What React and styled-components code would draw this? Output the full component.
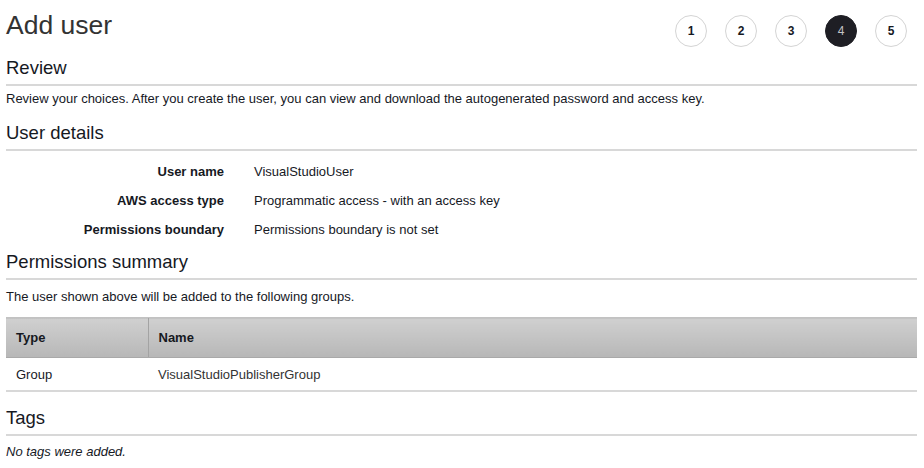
import { createGlobalStyle } from "styled-components";
import styled from "styled-components";

const GlobalStyle = createGlobalStyle`
  body {
    margin: 0;
    background: #ffffff;
    font-family: "Liberation Sans", Arial, sans-serif;
    color: #16191f;
  }
`;

const steps = [1, 2, 3, 4, 5];

const details = [
  { label: "User name", value: "VisualStudioUser" },
  { label: "AWS access type", value: "Programmatic access - with an access key" },
  { label: "Permissions boundary", value: "Permissions boundary is not set" },
];

export default function App() {
  return (
    <Page>
      <GlobalStyle />
      <TopBar>
        <Title>Add user</Title>
        <Steps>
          {steps.map((s) => (
            <Step key={s} $active={s === 4}>
              {s}
            </Step>
          ))}
        </Steps>
      </TopBar>

      <SectionTitle>Review</SectionTitle>
      <Text $top={5}>
        Review your choices. After you create the user, you can view and
        download the autogenerated password and access key.
      </Text>

      <SectionTitle>User details</SectionTitle>
      <DetailGrid>
        {details.map((d) => (
          <DetailRow key={d.label}>
            <Label>{d.label}</Label>
            <Value>{d.value}</Value>
          </DetailRow>
        ))}
      </DetailGrid>

      <SectionTitle>Permissions summary</SectionTitle>
      <Text $top={9}>
        The user shown above will be added to the following groups.
      </Text>
      <Table>
        <thead>
          <tr>
            <Th $w={142}>Type</Th>
            <Th>Name</Th>
          </tr>
        </thead>
        <tbody>
          <tr>
            <Td>Group</Td>
            <Td $muted>VisualStudioPublisherGroup</Td>
          </tr>
        </tbody>
      </Table>

      <SectionTitle>Tags</SectionTitle>
      <Note>No tags were added.</Note>
    </Page>
  );
}

const Page = styled.div`
  padding: 0 7px 0 6px;
`;

const TopBar = styled.div`
  display: flex;
  align-items: flex-start;
  justify-content: space-between;
  padding: 10px 0 3px;
`;

const Title = styled.h1`
  margin: 0;
  font-size: 26.5px;
  font-weight: 400;
  color: #333;
  line-height: 30px;
`;

const Steps = styled.div`
  display: flex;
  gap: 18px;
  margin: 5px 10px 0 0;
`;

const Step = styled.div`
  width: 32px;
  height: 32px;
  border-radius: 50%;
  box-sizing: border-box;
  border: 1px solid ${(p) => (p.$active ? "#1e1e24" : "#d4d4d4")};
  background: ${(p) => (p.$active ? "#1e1e24" : "#fff")};
  color: ${(p) => (p.$active ? "#c4c4c4" : "#16191f")};
  font-size: 12px;
  font-weight: ${(p) => (p.$active ? 400 : 700)};
  display: flex;
  align-items: center;
  justify-content: center;
`;

const SectionTitle = styled.h2`
  margin: 0;
  font-size: 18.5px;
  font-weight: 400;
  color: #16191f;
  padding: 8px 0 6px;
  border-bottom: 2px solid #d8d8d8;
  line-height: 20px;
`;

const Text = styled.p`
  margin: 0;
  font-size: 13px;
  line-height: 16px;
  padding: ${(p) => p.$top}px 0 8px;
`;

const DetailGrid = styled.div`
  display: flex;
  flex-direction: column;
  padding: 6px 0 0;
`;

const DetailRow = styled.div`
  display: grid;
  grid-template-columns: 218px 1fr;
  column-gap: 30px;
  font-size: 13px;
  line-height: 29px;
`;

const Label = styled.div`
  text-align: right;
  font-weight: 700;
`;

const Value = styled.div``;

const Table = styled.table`
  width: 100%;
  border-collapse: collapse;
  margin: 4px 0 8px;
  font-size: 13px;
`;

const Th = styled.th`
  text-align: left;
  font-weight: 700;
  height: 40px;
  box-sizing: border-box;
  padding: 0 10px;
  width: ${(p) => (p.$w ? `${p.$w}px` : "auto")};
  background: linear-gradient(#d0d0d0, #b7b7b7);
  border-top: 1px solid #c2c2c2;
  border-bottom: 1px solid #a9a9a9;
  & + & {
    border-left: 1px solid #a3a3a3;
  }
`;

const Td = styled.td`
  height: 32px;
  padding: 0 10px;
  border-bottom: 2px solid #d8d8d8;
  color: ${(p) => (p.$muted ? "#333" : "#16191f")};
`;

const Note = styled.p`
  margin: 0;
  padding-top: 8px;
  font-size: 13px;
  line-height: 16px;
  font-style: italic;
`;
